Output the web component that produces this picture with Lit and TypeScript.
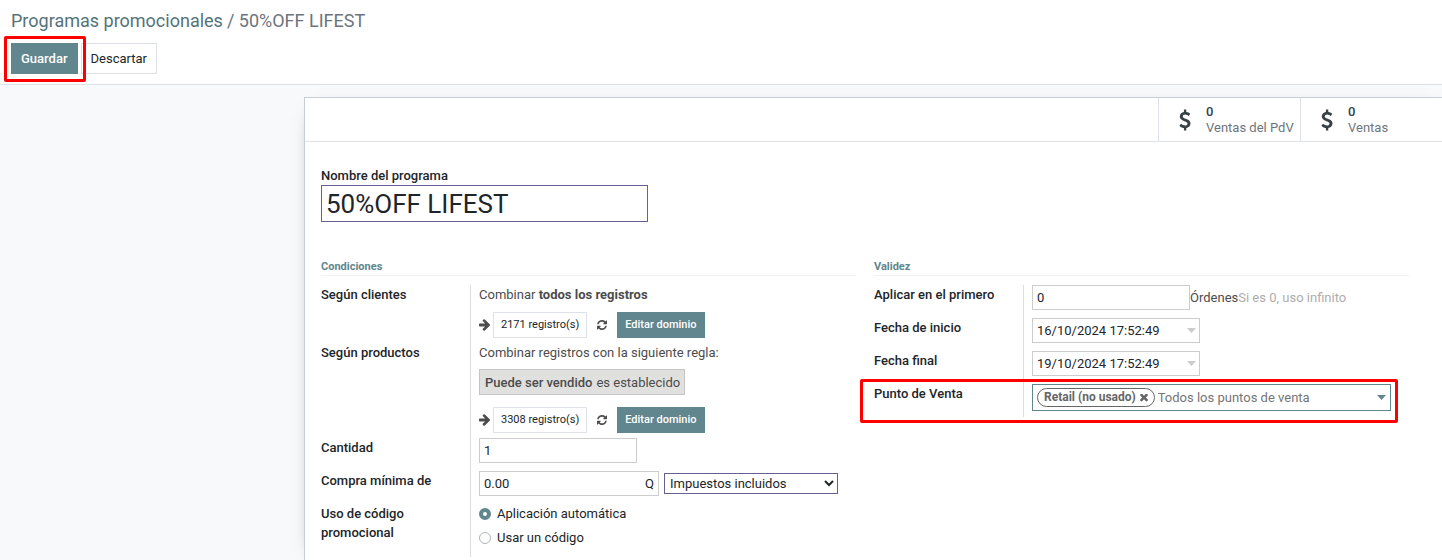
import { LitElement, html, css, svg } from "lit";
import { customElement } from "lit/decorators.js";

const icon = (viewBox: string, d: string, cls: string) =>
  html`<svg class="icon ${cls}" viewBox=${viewBox} aria-hidden="true">${svg`<path d=${d}></path>`}</svg>`;

const arrowIcon = icon(
  "0 181 1472 1558",
  "M1472 960q0 54-37 91l-651 651q-39 37-91 37-51 0-90-37l-75-75q-38-38-38-91t38-91l293-293H117q-52 0-84.5-37.5T0 1024V896q0-53 32.5-90.5T117 768h704L528 474q-38-36-38-90t38-90l75-75q38-38 90-38 53 0 91 38l651 651q37 35 37 90z",
  "arrow"
);
const refreshIcon = icon(
  "0 128 1536 1536",
  "M1511 1056q0 5-1 7-64 268-268 434.5T764 1664q-146 0-282.5-55T238 1452l-129 129q-19 19-45 19t-45-19-19-45v-448q0-26 19-45t45-19h448q26 0 45 19t19 45-19 45l-137 137q71 66 161 102t187 36q134 0 250-65t186-179q11-17 53-117 8-23 30-23h192q13 0 22.5 9.5t9.5 22.5zm25-800v448q0 26-19 45t-45 19h-448q-26 0-45-19t-19-45 19-45l138-138Q969 384 768 384q-134 0-250 65T332 628q-11 17-53 117-8 23-30 23H50q-13 0-22.5-9.5T18 736v-7q65-268 270-434.5T768 128q146 0 284 55.5T1297 340l130-129q19-19 45-19t45 19 19 45z",
  "refresh-icon"
);
const timesIcon = icon(
  "110 434 1188 1188",
  "M1298 1322q0 40-28 68l-136 136q-28 28-68 28t-68-28l-294-294-294 294q-28 28-68 28t-68-28l-136-136q-28-28-28-68t28-68l294-294-294-294q-28-28-28-68t28-68l136-136q28-28 68-28t68 28l294 294 294-294q28-28 68-28t68 28l136 136q28 28 28 68t-28 68l-294 294 294 294q28 28 28 68z",
  "times"
);
const dollarIcon = icon(
  "0 0 1024 1792",
  "M978 1185q0 153-99.5 263.5T620 1585v175q0 14-9 23t-23 9H453q-13 0-22.5-9.5T421 1760v-175q-66-9-127.5-31T192 1509.5t-74-48-46.5-37.5-17.5-18q-17-21-2-41l103-135q7-10 23-12 15-2 24 9l2 2q113 99 243 125 37 8 74 8 81 0 142.5-43t61.5-122q0-28-15-53t-33.5-42-58.5-37.5-66-32-80-32.5q-39-16-61.5-25T349 948.5t-62.5-31T230 882t-53.5-42.5-43.5-49-35.5-58-21-66.5-8.5-78q0-138 98-242t255-134V32q0-13 9.5-22.5T453 0h135q14 0 23 9t9 23v176q57 6 110.5 23t87 33.5 63.5 37.5 39 29 15 14q17 18 5 38l-81 146q-8 15-23 16-14 3-27-7-3-3-14.5-12t-39-26.5-58.5-32-74.5-26T537 430q-95 0-155 43t-60 111q0 26 8.5 48t29.5 41.5 39.5 33 56 31 60.5 27 70 27.5q53 20 81 31.5t76 35 75.5 42.5 62 50 53 63.5 31.5 76.5 13 94z",
  "dollar"
);

@customElement("app-root")
export class AppRoot extends LitElement {
  static styles = css`
    :host {
      display: flex;
      flex-direction: column;
      height: 100vh;
      overflow: hidden;
      background: #f8f9fb;
      color: #4c4c4c;
      font: 13px/19px Roboto, sans-serif;
    }
    *, *::before, *::after { box-sizing: border-box; }
    button, input, select { font: inherit; color: inherit; margin: 0; border-radius: 0; outline: none; }
    a { color: inherit; text-decoration: none; }
    .icon { display: block; fill: currentColor; flex: none; }

    header { padding: 8px 11px 10px; background: #fff; border-bottom: 1px solid #dee2e6; }
    .crumbs { display: flex; gap: 4px; margin: 0; padding: 0; list-style: none; font-size: 18px; line-height: 26px; color: #6c757d; }
    .crumbs a { color: #54737a; }
    .actions { display: flex; gap: 3px; margin-top: 9px; }
    .btn { height: 31px; padding: 0 9px; border: 1px solid #dee2e6; background: #fff; color: #212529; white-space: nowrap; }
    .btn.primary { background: #61868d; border-color: #61868d; color: #fff; font-weight: 500; }
    .btn.small { height: 26px; padding: 0 7px; font-size: 11px; line-height: 18px; }

    .marked { position: relative; }
    .marked::after { content: ""; position: absolute; inset: -7px -8px -8px -7px; border: 3px solid #f00; border-radius: 2px; pointer-events: none; }
    .row.marked::after { inset: -5px 11px -6px -14px; }

    main { flex: 1; min-height: 0; padding: 12px 0 0 304px; display: flex; }
    .sheet { flex: 1; min-width: 0; background: #fff; border: 1px solid #c8cdd6; border-width: 1px 0 0 1px; box-shadow: 0 5px 20px -15px #000; }
    .stats { display: flex; justify-content: flex-end; height: 44px; border-bottom: 1px solid #dee2e6; }
    .stat { display: flex; align-items: center; width: 142px; padding: 0 0 0 20px; border: 0; border-left: 1px solid #dee2e6; background: none; text-align: left; }
    .stat-text { display: flex; flex-direction: column; margin-left: 15px; line-height: 16px; color: #6c757d; white-space: nowrap; }
    .stat-text b { font-weight: 500; color: #374146; }
    .dollar { width: 12px; height: 22px; color: #374146; }

    form { padding: 24px 15px 0 16px; }
    label, .label { font-weight: 500; color: #212529; }
    .title { display: flex; flex-direction: column; align-items: flex-start; }
    .title input { width: 327px; height: 37px; padding: 0 4px; border: 1px solid #666092; font-size: 26px; color: #212529; background: #fff; }
    .groups { display: grid; grid-template-columns: 1fr 1fr; margin-top: 36px; }
    .group { padding-right: 18px; min-width: 0; }
    h2 { margin: 0 0 9px; font-size: 11px; line-height: 17px; font-weight: 700; color: #61868d; border-bottom: 1px solid #f0f1f3; }
    .row { display: grid; grid-template-columns: 150px 1fr; }
    .row > :first-child { border-right: 1px solid #dcdee0; padding-right: 20px; }
    .value { padding: 0 18px 8px 8px; min-width: 0; }
    .value.tight { padding-bottom: 5px; }
    .value.last { padding-bottom: 6px; }
    .line { display: flex; align-items: center; }
    .domain { margin-top: 8px; }
    .domain.spaced { margin-top: 12px; }
    .value p { margin: 0; }
    b { font-weight: 500; }
    p b { font-weight: 700; }
    .arrow { width: 11px; height: 12px; margin-right: 3px; }
    .refresh { display: flex; padding: 0; margin: 0 10px; border: 0; background: none; }
    .refresh-icon { width: 10px; height: 10px; }
    .rule { display: inline-flex; gap: 4px; height: 26px; align-items: center; margin-top: 7px; padding: 0 4px 0 5px; border: 1px solid #c4c4c4; background: #e0e0df; }
    .field { display: flex; align-items: center; height: 25px; border: 1px solid #ccc; background: #fff; color: #212529; }
    .field input { flex: 1; min-width: 0; width: 100%; height: 100%; padding: 0 4px; border: 0; background: none; }
    .w-number { width: 158px; }
    .w-money { width: 180px; padding-right: 4px; }
    .w-date { width: 168px; padding-right: 3px; }
    .w-tags { height: 27px; padding: 0 4px; border-color: #61868d; }
    .w-tags input { padding: 0 3px; }
    .w-tags input::placeholder { color: #757575; opacity: 1; }
    .caret { width: 9px; height: 5px; background: #ccc; clip-path: polygon(0 0, 100% 0, 50% 100%); flex: none; }
    .w-tags .caret { background: #61868d; }
    .hint { color: #adadad; }
    select { width: 174px; height: 21px; margin-left: 5px; padding: 0 1px; border: 1px solid #666092; background: #fff; color: #212529; }
    .tag { display: flex; align-items: center; gap: 4px; height: 19px; padding: 0 6px; border: 1px solid #666; border-radius: 10px; font-size: 12px; color: #666; white-space: nowrap; }
    .tag button { display: flex; padding: 0; border: 0; background: none; }
    .tag b { font-weight: 700; }
    .times { width: 8px; height: 8px; }
    .radios { display: flex; flex-direction: column; gap: 5px; padding-bottom: 10px; }
    .radios label { display: flex; align-items: center; gap: 6px; font-weight: 400; }
    input[type="radio"] { appearance: none; width: 12px; height: 12px; border: 1px solid #adb5bd; border-radius: 50%; background: #fff; }
    input[type="radio"]:checked { border: 4px solid #61868d; }
  `;

  private domain(count: number, spaced = false) {
    return html`<div class="line domain ${spaced ? "spaced" : ""}">
      ${arrowIcon}
      <button type="button" class="btn small">${count} registro(s)</button>
      <button type="button" class="refresh" aria-label="Actualizar">${refreshIcon}</button>
      <button type="button" class="btn small primary">Editar dominio</button>
    </div>`;
  }

  private stat(label: string) {
    return html`<button type="button" class="stat">
      ${dollarIcon}<span class="stat-text"><b>0</b><span>${label}</span></span>
    </button>`;
  }

  private date(id: string, label: string, value: string) {
    return html`<div class="row">
      <label for=${id}>${label}</label>
      <div class="value"><div class="field w-date"><input id=${id} .value=${value} /><span class="caret"></span></div></div>
    </div>`;
  }

  render() {
    return html`
      <header>
        <ol class="crumbs">
          <li><a href="#">Programas promocionales</a></li>
          <li>/ 50%OFF LIFEST</li>
        </ol>
        <div class="actions">
          <span class="marked"><button type="button" class="btn primary">Guardar</button></span>
          <button type="button" class="btn">Descartar</button>
        </div>
      </header>
      <main>
        <div class="sheet">
          <div class="stats">${this.stat("Ventas del PdV")}${this.stat("Ventas")}</div>
          <form>
            <div class="title">
              <label for="name">Nombre del programa</label>
              <input id="name" .value=${"50%OFF LIFEST"} />
            </div>
            <div class="groups">
              <section class="group">
                <h2>Condiciones</h2>
                <div class="row">
                  <div class="label">Según clientes</div>
                  <div class="value tight">
                    <p>Combinar <b>todos los registros</b></p>
                    ${this.domain(2171)}
                  </div>
                </div>
                <div class="row">
                  <div class="label">Según productos</div>
                  <div class="value tight">
                    <p>Combinar registros con la siguiente regla:</p>
                    <div class="line"><div class="rule"><b>Puede ser vendido</b><span>es establecido</span></div></div>
                    ${this.domain(3308, true)}
                  </div>
                </div>
                <div class="row">
                  <label for="qty">Cantidad</label>
                  <div class="value"><div class="field w-number"><input id="qty" .value=${"1"} /></div></div>
                </div>
                <div class="row">
                  <label for="min">Compra mínima de</label>
                  <div class="value line">
                    <div class="field w-money"><input id="min" .value=${"0.00"} /><span>Q</span></div>
                    <select aria-label="Impuestos">
                      <option>Impuestos incluidos</option>
                      <option>Impuestos excluidos</option>
                    </select>
                  </div>
                </div>
                <div class="row">
                  <div class="label" id="usage">Uso de código promocional</div>
                  <div class="value radios" role="radiogroup" aria-labelledby="usage">
                    <label><input type="radio" name="usage" checked />Aplicación automática</label>
                    <label><input type="radio" name="usage" />Usar un código</label>
                  </div>
                </div>
              </section>
              <section class="group">
                <h2>Validez</h2>
                <div class="row">
                  <label for="first">Aplicar en el primero</label>
                  <div class="value line">
                    <div class="field w-number"><input id="first" .value=${"0"} /></div>
                    <span>Órdenes</span><span class="hint">Si es 0, uso infinito</span>
                  </div>
                </div>
                ${this.date("start", "Fecha de inicio", "16/10/2024 17:52:49")}
                ${this.date("end", "Fecha final", "19/10/2024 17:52:49")}
                <div class="row marked">
                  <label for="pos">Punto de Venta</label>
                  <div class="value last">
                    <div class="field w-tags">
                      <span class="tag"><b>Retail (no usado)</b><button type="button" aria-label="Quitar">${timesIcon}</button></span>
                      <input id="pos" placeholder="Todos los puntos de venta" />
                      <span class="caret"></span>
                    </div>
                  </div>
                </div>
              </section>
            </div>
          </form>
        </div>
      </main>
    `;
  }
}
